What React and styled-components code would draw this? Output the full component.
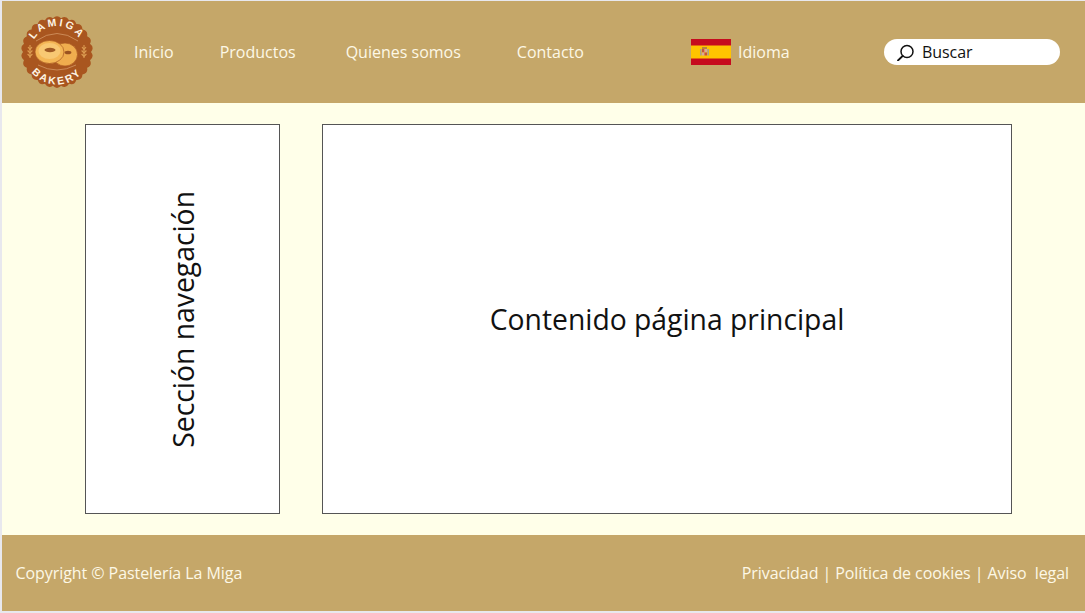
import React from "react";
import styled, { createGlobalStyle } from "styled-components";

const GlobalStyle = createGlobalStyle`
  html, body {
    margin: 0;
    padding: 0;
    background: #e8e8ee;
  }
  body {
    font-family: "Open Sans", "Liberation Sans", sans-serif;
  }
`;

// scalloped edge of the badge, one rounded bump per step
const badgeEdge = () => {
  const bumps = 26;
  const point = (r, a) => `${(36 + r * Math.cos(a)).toFixed(2)} ${(36 + r * Math.sin(a)).toFixed(2)}`;
  let d = `M${point(34, 0)}`;
  for (let i = 0; i < bumps; i++) {
    const step = (Math.PI * 2) / bumps;
    d += ` Q${point(38, (i + 0.5) * step)} ${point(34, (i + 1) * step)}`;
  }
  return d + "Z";
};

const Wheat = ({ x }) => (
  <g transform={`translate(${x} 35)`} fill="none" stroke="#dc9d52" strokeWidth="1.1">
    <path d="M0 -6 V7" />
    <path d="M-2 -4 L0 -1.5 L2 -4 M-2.4 -0.5 L0 2 L2.4 -0.5 M-2.4 3 L0 5.5 L2.4 3" />
  </g>
);

const Logo = () => (
  <LogoSvg viewBox="0 0 72 72">
    <defs>
      <path id="arcTop" d="M10 36 A26 26 0 0 1 62 36" />
      <path id="arcBottom" d="M3.5 36 A32.5 32.5 0 0 0 68.5 36" />
    </defs>
    <path fill="#a9561f" d={badgeEdge()} />
    <path d="M15 25 Q36 10 57 25" fill="none" stroke="#e2ac7c" strokeWidth="0.6" />
    <path d="M17 49 Q36 59 55 49" fill="none" stroke="#e2ac7c" strokeWidth="0.6" />
    <LogoText>
      <textPath href="#arcTop" startOffset="50%" textAnchor="middle">LAMIGA</textPath>
    </LogoText>
    <LogoText>
      <textPath href="#arcBottom" startOffset="50%" textAnchor="middle">BAKERY</textPath>
    </LogoText>
    <ellipse cx="44" cy="38.5" rx="12.5" ry="11.5" fill="#efad4e" stroke="#a9561f" strokeWidth="0.7" />
    <ellipse cx="47" cy="36.5" rx="3.4" ry="1.8" fill="#9a5220" />
    <ellipse cx="28.5" cy="36" rx="14.5" ry="11.5" fill="#f4b655" stroke="#a9561f" strokeWidth="0.7" />
    <ellipse cx="28.5" cy="35" rx="11" ry="8" fill="#f8c873" />
    <ellipse cx="29" cy="34" rx="5.5" ry="2.2" fill="#a05a24" />
    <Wheat x={9} />
    <Wheat x={63} />
  </LogoSvg>
);

const SpainFlag = () => (
  <FlagSvg viewBox="0 0 40 26">
    <rect width="40" height="26" fill="#c60b1e" />
    <rect y="6.5" width="40" height="13" fill="#ffc400" />
    <rect x="9" y="10" width="1.6" height="6.5" fill="#a9a08a" />
    <rect x="16.4" y="10" width="1.6" height="6.5" fill="#a9a08a" />
    <rect x="11" y="8" width="5" height="2" fill="#b8863c" />
    <rect x="11" y="10" width="2.5" height="3.5" fill="#c8503c" />
    <rect x="13.5" y="10" width="2.5" height="3.5" fill="#d8a8a0" />
    <rect x="11" y="13.5" width="2.5" height="3" fill="#d8a8a0" />
    <rect x="13.5" y="13.5" width="2.5" height="3" fill="#c8503c" />
  </FlagSvg>
);

const SearchIcon = () => (
  <IconSvg viewBox="0 0 18 18">
    <circle cx="10" cy="8.5" r="6" fill="none" stroke="#111" strokeWidth="1.5" />
    <path d="M5.6 13 L1 17.5" stroke="#111" strokeWidth="1.8" strokeLinecap="round" />
  </IconSvg>
);

export default function App() {
  return (
    <>
      <GlobalStyle />
      <Page>
        <Header>
          <Logo />
          <Nav>
            <NavLink $left={0}>Inicio</NavLink>
            <NavLink $left={46}>Productos</NavLink>
            <NavLink $left={50}>Quienes somos</NavLink>
            <NavLink $left={56}>Contacto</NavLink>
          </Nav>
          <Language>
            <SpainFlag />
            <NavLink $left={7}>Idioma</NavLink>
          </Language>
          <SearchBox>
            <SearchIcon />
            <SearchLabel>Buscar</SearchLabel>
          </SearchBox>
        </Header>
        <Main>
          <SideSection>
            <SideTitle>Sección navegación</SideTitle>
          </SideSection>
          <ContentSection>
            <ContentTitle>Contenido página principal</ContentTitle>
          </ContentSection>
        </Main>
        <Footer>
          <FooterText>Copyright © Pastelería La Miga</FooterText>
          <FooterText>Privacidad | Política de cookies | Aviso&nbsp; legal</FooterText>
        </Footer>
      </Page>
    </>
  );
}

const Page = styled.div`
  width: 1083px;
  height: 610px;
  margin: 1px 0 2px 2px;
  display: flex;
  flex-direction: column;
  background: #ffffe9;
`;

const Header = styled.header`
  height: 102px;
  flex-shrink: 0;
  background: #c5a769;
  display: flex;
  align-items: center;
  padding-left: 19px;
  box-sizing: border-box;
`;

const LogoSvg = styled.svg`
  width: 72px;
  height: 72px;
  flex-shrink: 0;
`;

const LogoText = styled.text`
  font-family: "Liberation Sans", sans-serif;
  font-size: 10.5px;
  font-weight: 700;
  fill: #fdf3e3;
  letter-spacing: 2.4px;
`;

const Nav = styled.nav`
  display: flex;
  align-items: center;
  margin-left: 41px;
  width: 557px;
`;

const NavLink = styled.a`
  color: #fdf8e6;
  font-size: 16px;
  line-height: 22px;
  white-space: nowrap;
  margin-left: ${(props) => props.$left}px;
`;

const Language = styled.div`
  display: flex;
  align-items: center;
  width: 193px;
`;

const FlagSvg = styled.svg`
  width: 40px;
  height: 26px;
  flex-shrink: 0;
`;

const SearchBox = styled.div`
  width: 176px;
  height: 26px;
  border-radius: 13px;
  background: #fff;
  display: flex;
  align-items: center;
  padding-left: 13px;
  box-sizing: border-box;
`;

const IconSvg = styled.svg`
  width: 18px;
  height: 18px;
  flex-shrink: 0;
`;

const SearchLabel = styled.span`
  margin-left: 7px;
  font-size: 16px;
  color: #111;
  letter-spacing: -0.05px;
`;

const Main = styled.main`
  flex: 1;
  display: flex;
  gap: 42px;
  padding: 21px 0 21px 83px;
  box-sizing: border-box;
`;

const Panel = styled.section`
  background: #fff;
  border: 1px solid #555;
  box-sizing: border-box;
  display: flex;
  align-items: center;
  justify-content: center;
  color: #111;
  font-size: 28.3px;
`;

const SideSection = styled(Panel)`
  width: 195px;
`;

const ContentSection = styled(Panel)`
  width: 690px;
`;

const SideTitle = styled.span`
  writing-mode: vertical-rl;
  transform: rotate(180deg);
  white-space: nowrap;
`;

const ContentTitle = styled.span`
  white-space: nowrap;
`;

const Footer = styled.footer`
  height: 76px;
  flex-shrink: 0;
  background: #c5a769;
  display: flex;
  align-items: center;
  justify-content: space-between;
  padding: 0 16px 0 13.5px;
  box-sizing: border-box;
`;

const FooterText = styled.span`
  color: #fdf8e6;
  font-size: 16px;
  letter-spacing: -0.07px;
  white-space: nowrap;
`;
